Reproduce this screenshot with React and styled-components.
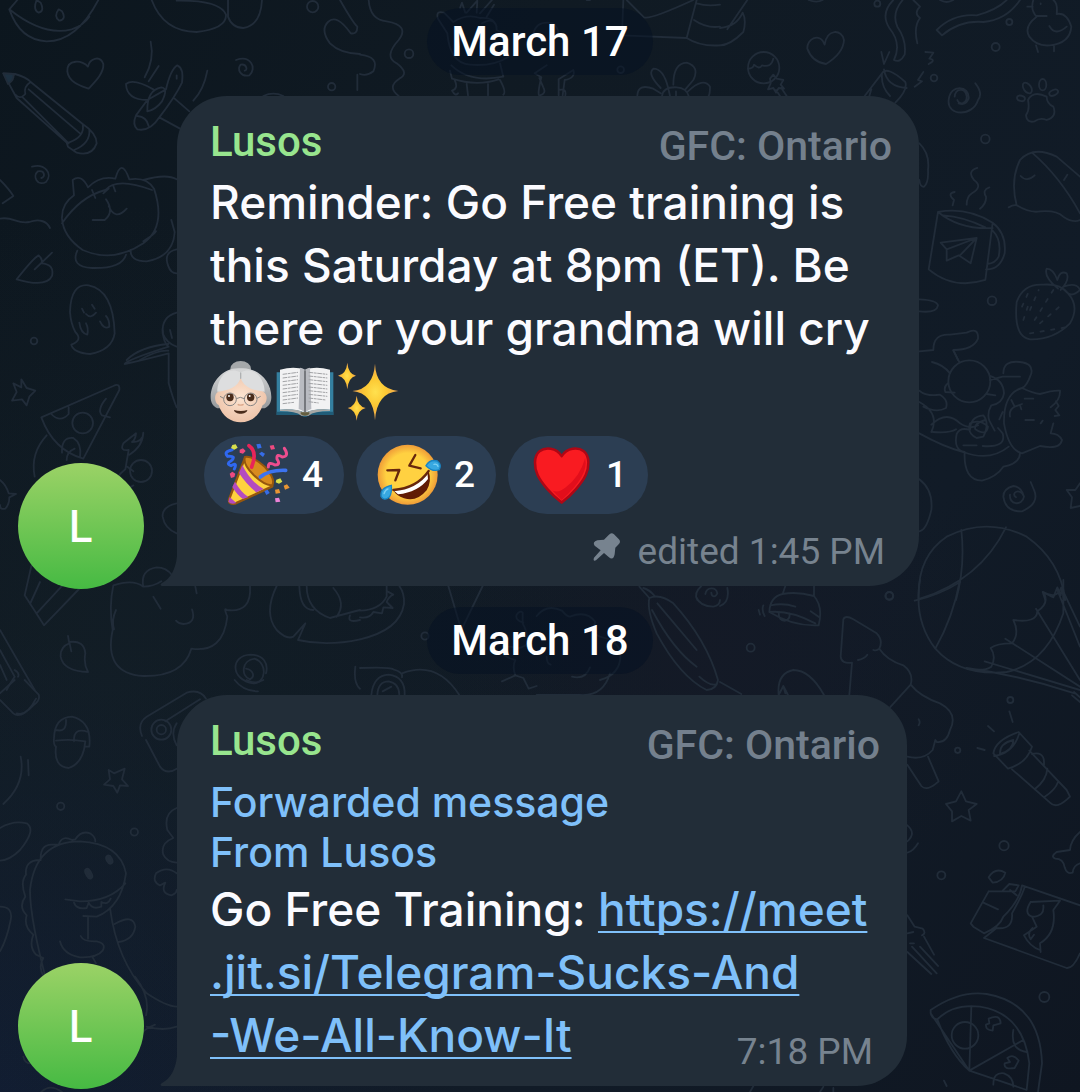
import React from 'react';
import styled, { createGlobalStyle } from 'styled-components';

const GlobalStyle = createGlobalStyle`
  body { margin: 0; background: #101a24; }
  *, *::before { box-sizing: border-box; }
`;

const textFont = '"Inter", "Roboto", sans-serif';
const labelFont = '"Roboto", "Noto Sans", sans-serif';

const Chat = styled.main`
  position: relative;
  isolation: isolate;
  overflow: hidden;
  display: flex;
  flex-direction: column;
  gap: 21px;
  min-height: 100vh;
  padding: 8px 18px 6px;
  background:
    radial-gradient(circle at 10% 62%, rgba(20, 32, 40, 0.5), transparent 40%),
    radial-gradient(circle at 0% 100%, rgba(18, 30, 54, 0.8), transparent 30%),
    radial-gradient(circle at 66% 60%, rgba(22, 25, 38, 0.6), transparent 30%),
    linear-gradient(125deg, #0c161e 0%, #101a23 30%, #111b27 70%, #0f1621 100%);
`;

const Wallpaper = styled.svg`
  position: absolute;
  inset: 0;
  z-index: -1;
  width: 100%;
  height: 100%;
  fill: none;
  stroke: #212c39;
  stroke-width: 5.5;
  stroke-linecap: round;
  stroke-linejoin: round;
`;

const DatePill = styled.time`
  align-self: center;
  padding: 0 24px;
  border-radius: 34px;
  background: rgba(4, 15, 34, 0.5);
  color: #fff;
  font: 500 42px/67px ${labelFont};
`;

const MessageRow = styled.article`
  display: flex;
  align-items: flex-end;
  gap: 33px;
`;

const Avatar = styled.div`
  flex: none;
  width: 126px;
  height: 126px;
  margin-bottom: -3px;
  border-radius: 50%;
  background: linear-gradient(#9bd266, #46ba43);
  color: #fff;
  font: 500 44px/126px ${textFont};
  text-align: center;
`;

const Bubble = styled.section`
  position: relative;
  flex: 0 1 ${(p) => p.$width}px;
  padding: 22px 27px 10px;
  border-radius: 50px 50px 50px 0;
  background: #222d38;
`;

const Tail = styled.svg`
  position: absolute;
  right: 100%;
  bottom: 0;
  width: 17px;
  height: 30px;
  fill: #222d38;
`;

const Header = styled.header`
  display: flex;
  justify-content: space-between;
  height: 50px;
  padding-left: 6px;
`;

const Sender = styled.strong`
  color: #98e58e;
  font: 500 42px/48px ${labelFont};
`;

const Group = styled.span`
  align-self: flex-end;
  color: #74808d;
  font: 500 41px/44px ${labelFont};
`;

const Text = styled.p`
  margin: 3px 0 0;
  padding-left: 6px;
  color: #fbfbff;
  font: 500 46px/63px ${textFont};
  white-space: nowrap;
`;

const EmojiLine = styled.span`
  display: flex;
  align-items: center;
  gap: 2px;
  height: 63px;
`;

const Emoji = styled.svg`
  flex: none;
  width: ${(p) => p.$size}px;
  height: ${(p) => p.$size}px;
`;

const Reactions = styled.div`
  display: flex;
  gap: 12px;
  margin: 13px 0 14px;
`;

const Reaction = styled.button`
  display: flex;
  align-items: center;
  gap: 10px;
  width: 140px;
  height: 78px;
  padding: 0 0 0 20px;
  border: 0;
  border-radius: 39px;
  background: #2c3e53;
  color: #fff;
  font: 500 37px/78px ${labelFont};
`;

const Meta = styled.footer`
  display: flex;
  justify-content: flex-end;
  gap: 16px;
  padding-right: 7px;
  color: #77838f;
  font: 400 37px/48px ${labelFont};
`;

const PinIcon = styled.svg`
  width: 32px;
  height: 32px;
  margin-top: 3px;
  fill: #77838f;
`;

const Forwarded = styled.p`
  margin: 10px 0 1px;
  padding-left: 6px;
  color: #7fc0fa;
  font: 500 41px/50px ${textFont};
`;

const Overlay = styled.div`
  display: grid;

  > * { grid-area: 1 / 1; }
  > ${Text} { margin: 0; padding-bottom: 9px; }
  > ${Meta} { place-self: end; }
`;

const Link = styled.a`
  color: #7fc0fa;
  text-decoration: underline;
  text-decoration-thickness: 2px;
  text-underline-offset: 5px;
  text-decoration-skip-ink: none;
`;

const third = (x, y) => `translate(${x} ${y}) scale(0.33333)`;

function Doodles() {
  return (
    <Wallpaper viewBox="0 0 1080 1092" preserveAspectRatio="xMidYMid slice" aria-hidden="true">
      <g transform={third(0, 0)}>
        <path d="M28 28Q60 120 140 124Q230 124 295 0M28 28Q130 110 215 88Q250 76 268 50M28 28L52 0M110 0Q98 30 116 38Q134 34 122 8ZM176 28Q160 50 178 62Q200 58 186 34Z" />
        <path d="M455 0Q490 95 590 96Q680 86 678 44Q660 0 530 2M684 0V50Q696 84 730 84Q782 76 786 0" />
        <circle cx="938" cy="20" r="17" /><circle cx="995" cy="260" r="11" /><circle cx="102" cy="1023" r="10" />
        <path d="M1020 0Q1060 70 1072 80Q1072 104 1052 100Q1010 40 984 66Q960 90 990 130Q1020 160 1080 162" />
        <path d="M264 200C250 180 200 176 202 214C206 250 250 260 266 266C280 250 312 222 310 192C300 164 268 176 264 200Z" />
        <path d="M10 220L45 222Q80 232 92 246L248 372Q290 400 290 430Q276 470 230 458L204 440L200 428L50 294ZM45 222Q20 244 28 250M92 246Q70 260 76 282Q60 300 46 284M86 268L240 400M66 290L206 430M248 372Q256 410 206 428M268 388Q272 430 222 450" />
        <path d="M10 220L40 222Q44 240 24 252Z" fill="#1d3040" />
        <path d="M452 125Q464 180 434 232M476 198L446 244M622 212Q612 268 580 302" />
        <path d="M442 300Q380 300 378 252Q400 234 460 268M498 268Q512 208 532 196Q552 204 546 248Q526 290 478 352Q450 396 412 388Q396 374 408 346L442 300ZM442 334Q440 270 484 262Q506 264 486 304Q466 330 442 334M412 348Q440 350 446 378M530 226V236M524 296L568 334M478 352L540 386" />
        <path d="M708 180C752 164 772 204 748 226C722 232 710 208 722 194C740 190 744 212 734 212M96 500C134 490 160 520 138 546C112 560 96 528 114 514C136 510 136 532 124 534" />
        <path d="M790 288Q820 274 850 288M1072 224V270" />
        <path d="M186 656Q184 612 222 586L218 540Q244 520 264 562Q300 526 346 536Q364 470 388 538Q440 530 462 566Q500 680 430 730Q340 790 248 750Q190 710 186 656ZM186 670Q240 590 316 570Q350 530 456 570M430 540Q500 520 530 538M276 570L286 594M340 558L346 574M310 580Q322 570 326 566M318 598Q344 636 314 660H278M326 618Q346 664 380 626M232 752Q210 800 276 804Q366 806 378 764M392 750Q390 784 440 784Q520 770 524 696L514 660M430 724Q462 704 468 694M530 748Q490 756 504 796Q512 820 530 820" />
        <path d="M0 540Q26 566 40 588L8 610M0 656C40 648 50 674 88 666C116 656 140 662 150 684M50 838Q100 774 116 766Q130 778 124 790Q164 792 156 828Q140 864 50 838ZM104 808L156 758" />
        <path d="M210 936Q212 850 266 856Q340 870 344 1000Q336 1050 270 1062Q220 1058 214 1034Q250 1020 226 996Q212 970 210 936ZM246 926L252 938M276 914L284 926M258 942Q272 958 288 938M238 968Q242 1000 262 1004Q266 984 258 970M300 964Q312 990 328 980Q328 958 318 948M530 938Q484 950 488 1000Q500 1030 530 1040M510 990L516 1014M380 1080Q420 1040 505 1032M420 1080Q470 1050 505 1052" />
      </g>
      <g transform={third(0, 330)}>
        <path d="M488 0Q490 40 506 50Q380 90 374 102Q430 90 506 70V160Q520 210 530 232M64 148L80 174L106 182L88 200L80 226L66 208L36 212L50 186L40 160L64 172ZM124 262L340 168Q360 158 358 180L250 386Q160 360 124 262ZM154 252Q180 280 206 252L206 232M318 206Q290 240 306 256L330 262M186 368Q184 320 220 324Q246 340 240 382M200 390Q200 366 224 356M140 316Q90 370 104 440" />
        <circle cx="248" cy="279" r="31" /><circle cx="423" cy="423" r="33" />
        <path d="M376 418L386 360Q358 364 370 340L408 310Q406 330 396 336Q430 336 430 308Q428 350 388 374M376 418Q360 430 350 446M382 410L400 424M400 466Q390 470 384 480M0 450Q18 464 26 490L48 492L28 502Q28 524 16 536Q0 540 0 525M530 520Q486 530 488 560Q494 596 530 610" />
        <path d="M94 708L74 796L132 886L240 774M90 822L120 756M110 850L186 768M430 770Q420 720 470 712Q500 712 516 736M340 766Q400 746 430 770Q460 770 484 754M340 766Q326 830 338 900Q310 1030 430 1038Q550 1040 574 956Q670 970 682 860Q670 830 680 840Q756 850 750 768M348 840Q334 870 342 898M460 800L482 836M586 770L590 790M576 838Q590 880 550 882Q534 880 528 872" />
        <path d="M204 918L208 940Q180 950 182 980Q190 1024 264 1026Q250 1000 256 970Q252 930 208 936L214 964M0 900L104 1080M0 960L44 1040Q24 1070 20 1080M0 1005L20 1050M44 1020Q60 1030 54 1040" />
        <path d="M738 1016C760 1020 766 1040 750 1048C722 1040 724 990 764 986C804 1000 798 1060 760 1060C690 1050 690 976 752 974C790 974 806 1000 798 1030M1066 1010Q1060 1060 1080 1076" />
        <path d="M830 768Q790 850 830 900Q860 930 880 920L916 880L894 930Q980 950 1080 928M898 768Q900 840 940 840M920 768Q920 840 990 864Q1040 850 1080 840M1000 774Q1040 820 1010 860M1050 856Q1040 880 1080 870" />
      </g>
      <g transform={third(0, 680)}>
        <path d="M0 60L40 100Q60 118 100 76Q122 60 116 44L74 0M50 100Q80 110 108 56M0 40L44 0M162 174Q164 112 216 110Q276 124 268 200L256 200M162 174Q160 196 168 200Q160 260 206 264Q250 250 256 184Q210 176 168 182M168 150Q200 158 198 120M222 184Q220 140 264 156" />
        <path d="M426 168Q410 130 440 110L560 38Q600 26 618 56M438 180L480 260Q500 286 530 266M496 124L600 58M530 130Q510 160 530 196" />
        <circle cx="484" cy="149" r="30" /><circle cx="484" cy="149" r="14" />
        <circle cx="182" cy="379" r="11" /><circle cx="403" cy="456" r="11" />
        <path d="M342 280L374 266L366 298L384 318L360 316L352 338L340 318L312 314L330 298L326 270ZM62 230Q78 310 10 372M84 240L86 286M0 444Q40 420 80 430Q110 450 60 510Q30 540 0 542M704 0Q730 34 774 34M740 0Q766 14 790 0M530 384Q490 400 502 450L520 474Q480 490 490 524Q500 546 530 548M530 580Q500 556 468 580Q456 606 480 616L496 608Q480 640 514 646Q530 640 530 630" />
        <path d="M144 920Q90 720 90 630Q106 484 240 484Q360 490 378 580Q364 680 290 710L250 708M376 610Q330 664 240 664L196 658M222 668Q230 690 260 684L266 668Q276 690 304 680V666Q324 676 332 656M122 540Q120 490 160 494L176 494Q186 464 216 480L226 478Q244 450 270 460Q286 470 286 484M120 540Q74 540 78 584Q60 606 76 650Q54 680 80 706Q70 740 100 764Q86 800 108 824L130 834Q114 860 130 888M330 684Q350 840 440 940Q500 980 530 980M344 732Q400 700 406 740Q400 780 356 786M264 710V776M242 768Q250 786 290 784Q320 790 308 812Q290 834 240 832Q190 824 180 784M278 832L288 850M405 890Q452 950 438 1006M414 1080Q420 1052 465 1034M440 1040Q490 1054 530 1040M70 1130Q74 1150 90 1150M124 1236Q150 1210 186 1236M0 680Q40 680 32 720Q20 780 0 814" />
        <ellipse cx="266" cy="581" rx="8" ry="16" transform="rotate(-28 266 581)" fill="#212c39" /><ellipse cx="328" cy="539" rx="8" ry="13" transform="rotate(-28 328 539)" fill="#212c39" />
      </g>
      <g transform={third(360, 580)}>
        <circle cx="195" cy="168" r="11" />
        <path d="M265 18L304 150L368 18M0 178Q120 150 132 72Q134 40 118 18M0 112Q30 116 40 96L66 100L70 82L98 84L80 66Q86 50 100 44L82 34M0 92Q60 90 80 50V18M0 264Q90 260 100 268Q130 276 126 292M34 345Q40 286 86 284Q136 290 134 345M52 345Q54 304 86 304Q118 310 118 345M68 334L94 320M126 280Q230 240 298 345" />
        <path d="M426 304L466 286Q456 260 466 240Q430 230 424 216Q440 190 470 206Q500 200 514 180M466 286L490 294L506 326L530 318M490 128Q464 120 470 104Q480 90 488 98V130Q510 170 500 200M530 108Q560 70 606 92Q620 110 630 110Q680 90 706 126Q690 160 720 170Q766 180 780 210Q790 280 720 300M750 280Q730 350 660 345H590L530 345M636 290Q676 300 690 262M560 230Q560 250 572 254" />
        <path d="M838 20L868 54Q860 90 890 160Q960 290 1040 330Q1070 328 1074 300Q1040 180 940 70Q900 40 868 54M850 24Q870 30 884 48M892 70L1010 210M876 90Q940 210 1010 260M1018 290Q1050 320 1070 312M1008 50Q1020 80 1060 80Q1080 76 1080 60M1024 18Q1000 40 1012 60M1036 42C1040 20 1068 20 1072 40C1064 56 1054 48 1054 38" />
      </g>
      <g transform={third(720, 580)}>
        <circle cx="508" cy="48" r="12" /><circle cx="92" cy="203" r="12" /><circle cx="871" cy="360" r="9" /><circle cx="713" cy="511" r="8" /><circle cx="852" cy="797" r="14" /><circle cx="664" cy="886" r="12" /><circle cx="973" cy="1251" r="15" />
        <path d="M0 78Q30 66 22 24M196 18L188 42Q150 50 148 96Q220 140 296 136Q310 80 282 48V18M188 42Q230 34 282 48M148 96Q210 90 286 130M152 76Q190 68 226 80M272 94L298 112M176 98Q176 124 196 122Q212 116 208 100M130 76Q124 90 134 108M116 90L120 104M0 306L64 342" />
        <path d="M176 345Q170 280 220 270Q270 270 312 345M176 345L190 318L204 345M190 318L196 340M370 118Q376 104 400 118L470 160Q490 180 478 206Q470 214 460 210M370 118L362 230Q364 252 396 248L388 345M414 240Q434 236 442 224M478 206Q500 240 550 256Q582 280 572 314L510 382M572 314Q600 350 660 370Q716 400 690 450Q680 490 650 486L646 480L638 510Q610 542 562 530M562 554L604 618Q620 636 656 604L624 530M596 418Q602 426 596 436" />
        <path d="M600 0Q580 120 646 206Q720 290 860 276Q980 250 1030 100V0M646 206Q700 110 720 0M584 62Q660 44 720 6M740 264Q790 276 814 260Q830 230 812 204Q830 190 876 190Q900 160 880 120Q950 130 952 94Q990 70 970 36Q1010 60 1024 22L1080 140M740 264Q900 286 1064 340M794 244L1080 330M856 176L1080 320M948 86L1080 300M1012 30L1080 200M1056 346L1080 366M1062 336L1080 352" />
        <path d="M868 394L878 426M804 438L822 454M772 504L794 510M820 520Q826 480 896 456L936 500Q920 550 864 566ZM822 528Q880 520 898 460M840 522Q838 490 880 480Q880 510 840 522M876 568L990 668Q1010 690 1050 650L1040 630L928 512M936 522Q970 514 972 544V556M944 628Q980 600 982 566M972 652Q1006 630 1014 606M724 634L738 664L770 672L746 690L752 722L724 708L696 724V694L678 672L708 664Z" />
        <path d="M562 736Q590 760 562 784M594 790Q580 814 562 818M1080 756Q1052 780 1050 810L1010 816Q990 830 1006 836Q1030 836 1034 862Q1040 884 1058 878Q1060 856 1080 850M562 1006L584 1040L608 1046Q620 1060 606 1066M562 1060L580 1056M570 1090H582M576 1100L650 1180M562 1116L634 1182M600 1100L654 1158M612 1070L642 1124" />
        <path d="M806 892Q826 860 856 878Q850 906 818 908ZM806 934L752 1030L760 1040L792 1060Q840 1040 850 1010Q900 960 906 916L1080 976M792 1074L1040 1164Q1060 1166 1080 1120M792 1074L830 1044Q880 1050 876 1000Q910 940 914 920M806 934L886 934L896 916L868 912L846 934M790 968L834 988M870 930L890 946M932 966L1020 962L1000 990Q1010 1060 960 1090L962 1116M932 966Q910 1000 936 1010Q974 1010 970 976M936 1010L950 1040L912 1066Q930 1100 960 1110M938 1044Q920 1060 932 1078L942 1064" />
        <path d="M632 1300V1290Q720 1230 800 1242Q960 1270 966 1450L954 1536M632 1300Q636 1316 652 1318Q700 1270 780 1280Q910 1300 928 1450L920 1530L748 1472ZM652 1318Q690 1420 748 1472L754 1280M748 1472L910 1380M880 1350Q870 1410 920 1416M820 1514Q820 1476 852 1480Q880 1490 880 1520M806 1316Q840 1300 842 1330L820 1336L818 1352Q796 1350 798 1334L808 1330ZM862 1434Q880 1420 896 1442L884 1464Q850 1470 854 1450L870 1446ZM90 1536L100 1518M300 1536L310 1520M340 1536V1524M672 1502L680 1518" />
        <circle cx="735" cy="1366" r="40" />
      </g>
      <g transform={third(720, 0)}>
        <circle cx="472" cy="11" r="9" /><circle cx="868" cy="66" r="9" /><circle cx="827" cy="141" r="12" /><circle cx="642" cy="234" r="10" /><circle cx="796" cy="417" r="13" /><circle cx="816" cy="902" r="13" /><circle cx="131" cy="203" r="47" />
        <path d="M82 0L22 88M0 84Q50 80 68 38Q80 60 70 96Q30 136 0 136M266 0Q290 10 308 0M660 0Q680 12 700 0M84 206Q100 206 102 194Q118 210 126 196Q154 204 160 176M150 236L160 224L170 236L190 240L182 254L192 266L176 264L168 278L160 264L144 268L152 250ZM168 270L180 288M184 264L200 288" />
        <path d="M314 134C300 96 260 116 262 146Q276 186 318 192Q370 160 372 120C366 86 320 86 314 134ZM520 0Q480 40 508 84Q546 130 522 180Q540 190 554 164Q560 120 532 80Q514 40 548 0M580 0L600 20Q580 40 600 54Q580 80 592 130M484 156L492 192L508 156M616 156L640 158L628 176Q650 180 626 192M610 216L594 240L606 244L584 260M434 288L486 220Q500 196 556 246Q564 270 526 308M486 220Q482 260 510 288M492 208Q500 260 560 264M454 268L448 288" />
        <path d="M650 90Q700 40 770 46Q830 30 860 0M666 106L650 90M666 106Q720 60 790 66Q860 60 900 0M940 0Q930 30 950 50Q910 80 928 110Q950 140 990 136Q1050 130 1054 80Q1040 36 1010 42Q1014 10 1000 0M922 20H938M948 48H980M988 78Q1006 110 1040 80M948 136L954 156M1002 138V154M962 10V12" />
        <path d="M712 300C718 318 742 310 740 288C734 260 706 266 704 290M686 300C680 350 760 350 774 300Q790 280 766 250M686 300C690 250 750 256 746 296Q736 318 716 310M918 345Q930 330 924 300Q940 270 980 290Q980 310 1000 320Q1012 350 980 360Q960 352 944 364Q920 370 918 345Z" />
        <ellipse cx="922" cy="264" rx="11" ry="18" transform="rotate(-35 922 264)" /><ellipse cx="968" cy="254" rx="11" ry="17" /><ellipse cx="1001" cy="278" rx="8" ry="14" transform="rotate(65 1001 278)" /><ellipse cx="903" cy="295" rx="8" ry="12" transform="rotate(-75 903 295)" />
        <path d="M866 622Q880 614 890 616Q870 540 900 480Q940 436 1010 470L1080 530M936 458Q1020 530 1080 640M890 616Q930 640 960 634Q1010 630 1030 650Q1060 670 1080 660M902 528Q920 548 944 526M1042 524L1032 540M598 430Q630 460 624 510Q626 550 612 560Q600 562 598 540" />
        <path d="M654 636Q740 620 818 668L796 840Q700 870 626 808ZM654 636Q720 690 818 684M670 646Q730 650 796 682M818 668Q860 700 854 760Q840 810 798 808M818 692Q846 720 836 770Q826 790 802 792M662 728L770 714L752 790L716 766L680 782V748ZM680 748L770 714L720 766M704 576Q680 580 702 600L698 616M772 504Q740 514 762 540Q790 560 756 580Q740 590 740 614M808 562Q786 570 798 590Q800 610 780 626" />
        <path d="M890 906Q910 850 970 854Q1020 850 1044 880Q1080 920 1050 970Q1000 1020 930 1018Q880 1010 890 906ZM1014 866Q970 830 980 806Q1000 806 1012 840Q1020 810 1040 820Q1050 840 1022 870M1030 860Q1070 846 1080 870Q1060 890 1044 880M598 898Q650 900 654 916Q650 940 598 934M598 1054L640 1050Q640 1000 690 1004L740 998Q776 980 774 1016Q760 1050 700 1050L714 1080" />
        <path strokeDasharray="10 22" d="M906 920L924 880M930 930L956 870M944 960L1000 870M960 970L1030 910M930 1000L1050 980M910 960L930 900" />
      </g>
      <g transform={third(820, 300)}>
        <circle cx="448" cy="244" r="63" /><circle cx="208" cy="887" r="11" />
        <path d="M400 152L418 186M336 186Q370 194 390 220M298 272Q320 290 360 284Q386 300 378 324Q350 340 310 320M298 306Q360 340 334 396M298 400Q370 440 430 456Q510 486 566 440M334 374Q380 330 420 370Q450 390 474 376M338 396Q390 400 408 388M384 250Q370 260 376 276L404 278M500 282L526 286M510 240L548 230H600M510 228Q550 240 552 280Q548 310 514 316Q500 340 508 362L524 392M550 220Q550 180 600 186Q640 190 634 220Q620 260 606 264M606 264Q550 280 552 370Q566 450 606 460L660 438Q720 450 726 420Q716 400 692 400L700 370M606 264Q640 280 660 282Q700 270 720 272Q722 300 692 322M708 304L716 318L706 330L718 346L704 348M614 296H640M616 360H642M668 362L662 370M574 300L584 320L606 312M584 320Q566 330 570 350M600 316L604 328M548 336L538 358M410 402Q400 450 434 456Q430 540 486 542Q530 530 550 500Q600 490 600 460M410 402Q420 380 450 390Q450 350 490 346Q510 370 490 410L470 414Q440 400 450 370Q480 356 504 380Q500 410 466 388Q460 370 496 360M430 436H470M488 438Q560 444 548 400L534 384" />
        <path d="M588 592C570 580 600 560 612 590C606 620 566 614 570 584M550 590Q550 566 580 558Q604 560 612 590M550 590Q556 636 606 634Q660 610 642 570L632 546M780 550L766 570H740L756 592L752 624L780 618M298 538Q340 570 334 630Q320 690 298 694M296 900Q290 770 380 710Q500 650 620 710Q720 780 736 900M424 690Q436 800 408 900M558 682Q480 840 300 896M668 876L676 900M668 876L700 892L712 862L722 886L726 864L732 900" />
      </g>
      <g transform={third(360, 0)}>
        <circle cx="147" cy="161" r="13" /><circle cx="782" cy="209" r="10" />
        <path d="M26 0Q30 60 80 64Q150 76 116 120Q70 170 110 190Q150 220 118 236Q80 260 116 288M0 164Q60 170 40 214Q20 230 0 222M262 100L234 56Q226 30 252 38L280 66Q320 40 360 54Q410 50 410 90Q450 110 446 170Q400 200 330 194Q270 190 262 100M300 24L306 8L316 38M320 38L352 2L350 38M360 40L396 0M380 50L402 14M274 196Q330 250 430 230L420 190M270 212L276 236Q350 260 416 238M284 240Q296 266 276 272Q286 290 294 280M320 252L324 286M384 252V286M420 240Q440 276 430 284M366 70Q400 50 410 80M520 100Q530 60 580 70Q600 90 594 110M560 196L524 220L544 232Q530 290 540 286Q560 280 550 262L538 234M596 286V238L640 210Q648 234 614 240L608 286M596 270Q620 264 616 286" />
        <path d="M790 0L786 106L980 114L1010 0M800 0L852 52Q870 60 1000 0M1002 60Q1040 86 1080 80M980 114Q1020 140 1080 136M1010 10Q1040 20 1080 14M832 286Q834 250 880 266L902 280M902 264Q860 220 880 206Q910 206 924 262M940 254Q940 190 980 188Q1020 200 1000 240L976 268M984 274Q1030 230 1050 260Q1050 280 1046 288M906 288Q910 260 950 262Q980 264 986 288M926 270L930 288M948 274V288M680 0H690" />
      </g>
    </Wallpaper>
  );
}

const Grandma = () => (
  <Emoji $size={62} viewBox="0 0 186 186" role="img" aria-label="Grandma">
    <defs>
      <radialGradient id="gm-skin" cx=".5" cy=".45" r=".6"><stop offset="0" stopColor="#fde5d2" /><stop offset="1" stopColor="#ecc0a5" /></radialGradient>
      <linearGradient id="gm-hair" x2="0" y2="1"><stop offset="0" stopColor="#d6d7d8" /><stop offset="1" stopColor="#96999c" /></linearGradient>
    </defs>
    <ellipse cx="92" cy="24" rx="31" ry="24" fill="#a5a8aa" />
    <path d="M92 22C42 18 2 60 2 108c0 18 8 28 20 34h142c12-6 20-16 20-34C184 60 142 18 92 22Z" fill="url(#gm-hair)" />
    <path d="M25 92C34 66 72 68 92 46c22 24 58 20 68 46 18 12 8 38-2 40-10 34-38 52-66 52s-56-18-66-52C14 128 10 98 25 92Z" fill="url(#gm-skin)" />
    <path d="M92 34C48 14 22 56 22 92c34-4 62-14 70-42 8 28 36 38 72 42 0-36-28-78-72-58Z" fill="#dddedf" />
    <path d="M92 36V52" stroke="#aeb0b2" strokeWidth="4" strokeLinecap="round" />
    <g fill="#4a2c1b"><ellipse cx="60" cy="109" rx="11" ry="12" /><ellipse cx="122" cy="109" rx="11" ry="12" /><path d="M72 147q21 6 40 0c-2 15-38 15-40 0Z" /></g>
    <circle cx="57" cy="105" r="3" fill="#fff" /><circle cx="119" cy="105" r="3" fill="#fff" />
    <g fill="none" stroke="#878584" strokeWidth="3"><circle cx="60" cy="115" r="19" /><circle cx="122" cy="115" r="19" /><path d="M79 113q12-8 24 0M41 112l-11-6M141 112l11-6" /></g>
    <path d="M83 130q8 5 18 0" fill="none" stroke="#dba88b" strokeWidth="4" />
  </Emoji>
);

const Book = () => (
  <Emoji $size={62} viewBox="0 0 186 186" role="img" aria-label="Open book">
    <path d="M8 34H178V162H106Q93 172 80 162H8Z" fill="#347f9f" />
    <path d="M8 152H178V162H106Q93 172 80 162H8Z" fill="#205c78" />
    <path d="M18 26Q60 14 93 26Q126 14 168 26V146Q120 142 93 156Q66 142 18 146Z" fill="#f2f2f3" />
    <path d="M78 20Q93 22 93 32V156Q84 146 74 144ZM108 20Q93 22 93 32V156Q102 146 112 144Z" fill="#b9bbc1" />
    <path d="M93 28V155" stroke="#55575c" strokeWidth="4" />
    <path d="M18 146Q66 142 88 154H98Q120 142 168 146V150Q120 150 104 164H82Q66 150 18 150Z" fill="#a7a8a6" />
    <path d="M80 154H106V160Q93 168 80 160Z" fill="#665f40" />
    <g stroke="#a2a3a6" strokeWidth="3" strokeDasharray="14 2 8 2"><path d="M26 40l46-6M26 51l46-6M26 62l46-6M26 73l46-6M26 84l46-6M26 95l46-6M26 106l46-6M26 117l46-6M26 128l34-4M104 34l56 6M104 45l56 6M104 56l56 6M104 67l56 6M104 78l56 6M104 89l56 6M104 100l56 6M104 111l52 6M104 122l30 4" /></g>
  </Emoji>
);

const Sparkles = () => (
  <Emoji $size={62} viewBox="0 0 186 186" role="img" aria-label="Sparkles">
    <defs><radialGradient id="spark"><stop offset="0" stopColor="#ffe14f" /><stop offset=".45" stopColor="#fcc934" /><stop offset="1" stopColor="#efa34e" /></radialGradient></defs>
    <g fill="url(#spark)">
      <path d="M111 8q3 74 70 82-65 6-70 88-5-82-68-88 63-6 68-82Z" />
      <path d="M28 5q3 34 26 39-23 5-26 41-3-36-28-41 25-5 28-39Z" />
      <path d="M56 104q3 32 27 37-24 5-27 38-3-33-27-38 24-5 27-37Z" />
    </g>
  </Emoji>
);

const Party = () => (
  <Emoji $size={68} viewBox="9 2 204 204" role="img" aria-label="Party popper">
    <path d="M72 52L24 178Q22 192 42 190L154 138Q150 84 72 52Z" fill="#fed23e" stroke="#96570d" strokeWidth="7" strokeLinejoin="round" />
    <path d="M54 98Q76 132 106 156L128 146Q88 124 64 74ZM34 140Q50 166 66 176L82 170Q60 156 42 124Z" fill="#b44bc0" />
    <path d="M26 170L22 184Q30 194 46 188Z" fill="#b44bc0" />
    <path d="M72 50Q64 70 98 104Q134 138 154 134Q164 116 132 80Q94 46 72 50Z" fill="#d88b1e" stroke="#96570d" strokeWidth="6" />
    <g fill="none" strokeWidth="11" strokeLinecap="round">
      <path d="M84 16Q110 34 92 80" stroke="#e82459" />
      <path d="M194 90Q146 88 118 110" stroke="#3c73f0" />
      <path d="M34 28Q6 34 20 48Q48 46 30 62Q14 70 30 76Q50 64 40 86" stroke="#2f68f0" strokeWidth="9" />
      <path d="M190 24Q206 48 184 50Q166 38 168 56Q180 74 162 74Q142 62 142 80" stroke="#ed4d8e" strokeWidth="9" />
    </g>
    <path d="M34 14l10-2 6 10-10 6-10-5ZM166 118l12-4 6 10-10 6-10-4Z" fill="#d7df4d" />
    <path d="M56 28l10-4 8 8-8 8-10-3ZM146 16l12-2 4 12-12 2ZM26 100l8-6 9 6-3 10-10 3Z" fill="#ed4a7f" />
    <path d="M106 12l12-2 4 12-12 3ZM114 40l8-6 10 6-6 10ZM130 152l10-4 6 10-10 6Z" fill="#366de8" />
    <path d="M162 148l12-2 4 12-14 2ZM188 136l10-4 8 10-14 6Z" fill="#e89533" /><path d="M162 174l12-2 4 12-14 2Z" fill="#ed83d8" />
  </Emoji>
);

const Rofl = () => (
  <Emoji $size={68} viewBox="4 0 204 204" role="img" aria-label="Rolling on the floor laughing">
    <defs><radialGradient id="face"><stop offset=".72" stopColor="#ffd141" /><stop offset="1" stopColor="#ef9c38" /></radialGradient></defs>
    <circle cx="99" cy="101" r="90" fill="url(#face)" />
    <g fill="none" stroke="#67270c" strokeWidth="7" strokeLinecap="round" strokeLinejoin="round"><path d="M38 88L74 87L62 118M122 42L104 74L138 82" /></g>
    <path d="M56 147Q126 142 162 90Q172 120 156 148Q126 184 88 172Q64 164 56 147Z" fill="#611b05" />
    <path d="M58 149Q126 142 158 94L160 114Q130 154 70 160Z" fill="#fff" />
    <path d="M56 147Q126 142 162 90" fill="none" stroke="#67270c" strokeWidth="7" strokeLinecap="round" />
    <path d="M50 133Q16 140 19 166Q28 182 44 168Q52 156 50 133ZM154 74Q166 54 188 60Q202 72 194 86Q174 94 154 74Z" fill="#37a8e1" stroke="#1985c4" strokeWidth="4" />
    <path d="M28 158q4-12 12-14M178 70q10-2 12 6" fill="none" stroke="#7bd0f4" strokeWidth="4" strokeLinecap="round" />
  </Emoji>
);

const Heart = () => (
  <Emoji $size={68} viewBox="-4 0 212 212" role="img" aria-label="Red heart">
    <path d="M101 47C84 20 50 18 32 32C12 48 16 84 26 106C38 132 70 168 101 192C132 168 164 132 176 106C186 84 190 48 170 32C152 18 118 20 101 47Z" fill="#f91b21" stroke="#af0715" strokeWidth="8" strokeLinejoin="round" />
    <path d="M174 54Q188 106 101 184L72 154Q90 164 112 146Q158 112 174 54Z" fill="#e20e1b" />
  </Emoji>
);

const TailShape = () => (
  <Tail viewBox="0 0 17 30" aria-hidden="true"><path d="M17 0V30H2Q-1 29 2 27Q15 20 17 0Z" /></Tail>
);

const MessageHeader = () => (
  <Header><Sender>Lusos</Sender><Group>GFC: Ontario</Group></Header>
);

export default function App() {
  return (
    <Chat>
      <GlobalStyle />
      <Doodles />
      <DatePill>March 17</DatePill>
      <MessageRow>
        <Avatar>L</Avatar>
        <Bubble $width={742}>
          <TailShape />
          <MessageHeader />
          <Text>
            Reminder: Go Free training is<br />
            this Saturday at 8pm (ET). Be<br />
            there or your grandma will cry
            <EmojiLine><Grandma /><Book /><Sparkles /></EmojiLine>
          </Text>
          <Reactions>
            <Reaction type="button"><Party />4</Reaction>
            <Reaction type="button"><Rofl />2</Reaction>
            <Reaction type="button"><Heart />1</Reaction>
          </Reactions>
          <Meta>
            <PinIcon viewBox="0 0 96 96" role="img" aria-label="Pinned">
              <path d="M56 12Q64 2 72 10L86 24Q94 32 86 40L76 50L74 70Q70 90 56 78L42 66L18 88Q8 92 12 80L32 58L14 44Q6 34 22 28L42 26Z" />
            </PinIcon>
            edited 1:45 PM
          </Meta>
        </Bubble>
      </MessageRow>
      <DatePill>March 18</DatePill>
      <MessageRow>
        <Avatar>L</Avatar>
        <Bubble $width={730}>
          <TailShape />
          <MessageHeader />
          <Forwarded>Forwarded message<br />From Lusos</Forwarded>
          <Overlay>
            <Text>
              Go Free Training:{' '}
              <Link href="https://meet.jit.si/Telegram-Sucks-And-We-All-Know-It">
                https://meet<br />.jit.si/Telegram-Sucks-And<br />-We-All-Know-It
              </Link>
            </Text>
            <Meta>7:18 PM</Meta>
          </Overlay>
        </Bubble>
      </MessageRow>
    </Chat>
  );
}
